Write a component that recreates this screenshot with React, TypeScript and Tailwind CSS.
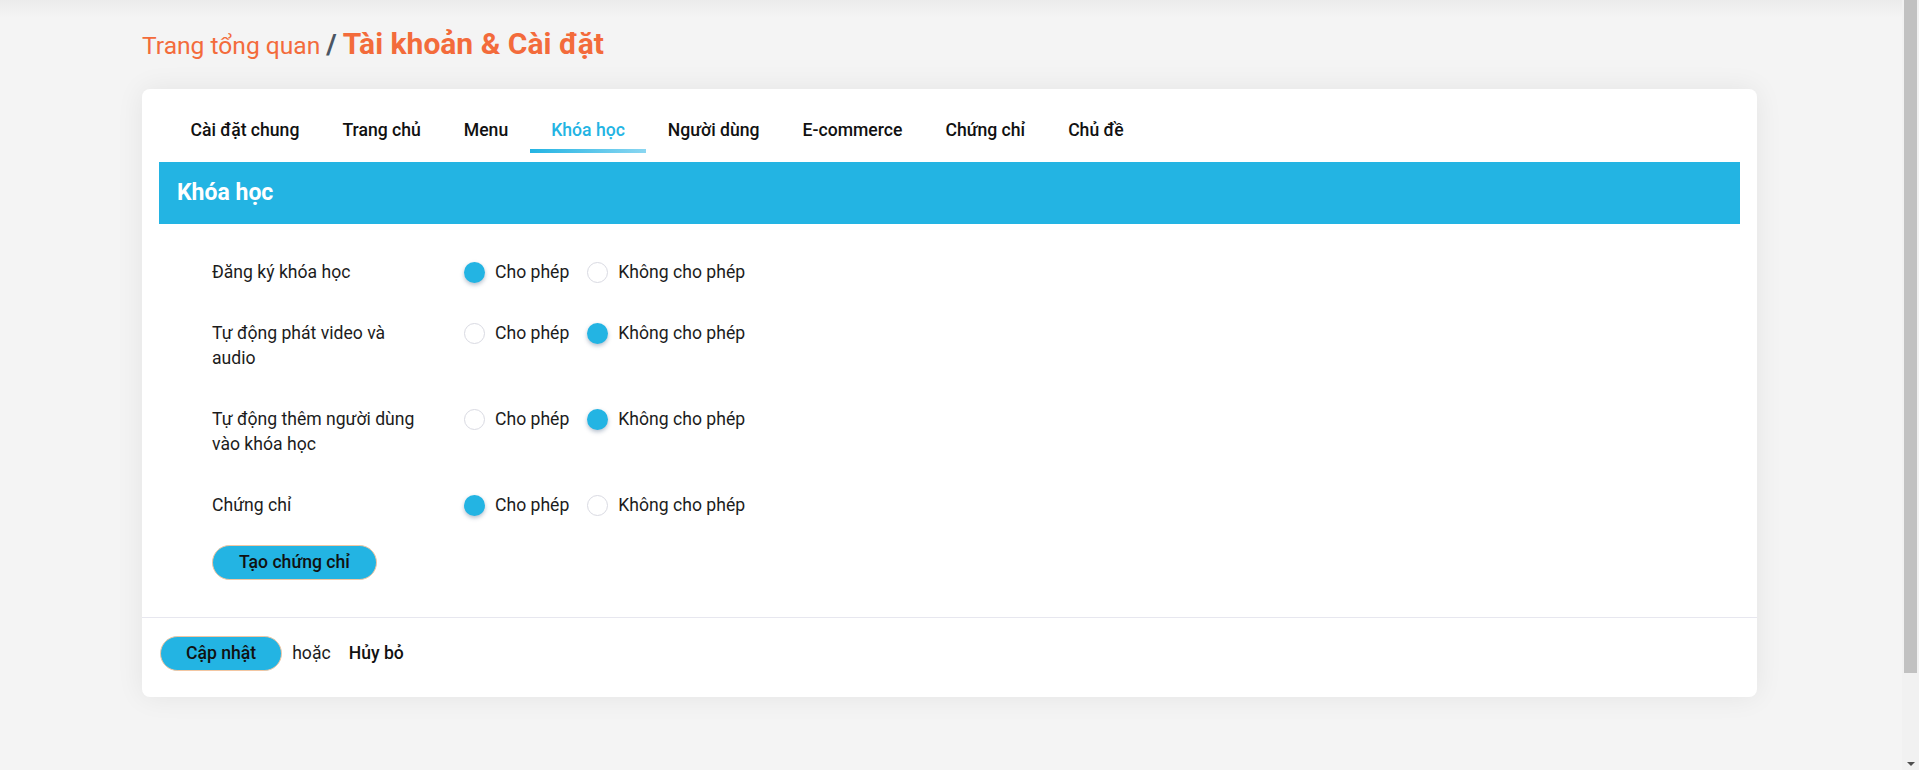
const tabs = ['Cài đặt chung', 'Trang chủ', 'Menu', 'Khóa học', 'Người dùng', 'E-commerce', 'Chứng chỉ', 'Chủ đề'];

const settings = [
  { label: 'Đăng ký khóa học', allow: true },
  { label: 'Tự động phát video và audio', allow: false },
  { label: 'Tự động thêm người dùng vào khóa học', allow: false },
  { label: 'Chứng chỉ', allow: true },
];

function Radio({ checked, label }: { checked: boolean; label: string }) {
  return (
    <label className="flex items-center gap-[10px] cursor-pointer">
      {checked ? (
        <span className="w-[21px] h-[21px] rounded-full bg-[#23b4e3] shadow-[0_2px_4px_rgba(40,70,110,0.35)]" />
      ) : (
        <span className="w-[21px] h-[21px] rounded-full bg-white border border-[#d9dae2]" />
      )}
      <span className="text-[17.6px] leading-[25px] text-[#1c1c1c]">{label}</span>
    </label>
  );
}

export default function App() {
  return (
    <div className="flex h-[770px] overflow-hidden bg-[linear-gradient(#ebebeb,#f4f4f4_18px)] font-['Roboto',sans-serif]">
      <div className="flex-1 pl-[142px] pr-[145px] pt-[25px]">
        <div className="flex items-baseline leading-[38px] mb-[24px]">
          <span className="text-[24.6px] text-[#f36b3b]">Trang tổng quan</span>
          <span className="text-[28px] font-bold text-[#4b5563] mx-[6px]">/</span>
          <span className="text-[30px] font-bold text-[#f36b3b]">Tài khoản &amp; Cài đặt</span>
        </div>

        <div className="bg-white rounded-[8px] shadow-[0_0_28px_rgba(0,0,0,0.07)]">
          <div className="px-[17px] pt-[17px]">
            <div className="flex pl-[10px]">
              {tabs.map((t) => {
                const active = t === 'Khóa học';
                return (
                  <div key={t} className="flex flex-col items-stretch pt-[12px]">
                    <span
                      className={`px-[21.5px] text-[17.6px] leading-[24px] font-medium whitespace-nowrap ${
                        active ? 'text-[#23b4e3]' : 'text-[#111]'
                      }`}
                    >
                      {t}
                    </span>
                    <span
                      className={`mt-[7px] h-[4px] ${
                        active ? 'bg-[linear-gradient(90deg,#23b4e3,#8ad6f1)]' : 'bg-transparent'
                      }`}
                    />
                  </div>
                );
              })}
            </div>

            <div className="mt-[9px] h-[62px] bg-[#23b4e3] flex items-center px-[18px]">
              <h2 className="text-[23px] font-bold text-white">Khóa học</h2>
            </div>

            <div className="pl-[53px] pt-[36px] pb-[37px] flex flex-col">
              <div className="flex flex-col gap-[36px]">
                {settings.map((s) => (
                  <div key={s.label} className="flex items-start">
                    <div className="w-[215px] text-[17.6px] leading-[25px] text-[#1c1c1c]">{s.label}</div>
                    <div className="ml-[37px] flex items-center gap-[18px] h-[25px]">
                      <Radio checked={s.allow} label="Cho phép" />
                      <Radio checked={!s.allow} label="Không cho phép" />
                    </div>
                  </div>
                ))}
              </div>
              <div className="mt-[27px]">
                <button className="h-[35px] px-[26px] rounded-full bg-[#23b4e3] border border-[#f2c6a2] text-[17.6px] font-medium text-[#111]">
                  Tạo chứng chỉ
                </button>
              </div>
            </div>
          </div>

          <div className="border-t border-[#e7e7ef] px-[18px] pt-[18px] pb-[26px] flex items-center">
            <button className="h-[35px] px-[25px] rounded-full bg-[#23b4e3] border border-[#f2c6a2] text-[17.6px] font-medium text-[#111]">
              Cập nhật
            </button>
            <span className="ml-[10px] text-[17.6px] text-[#1c1c1c]">hoặc</span>
            <button className="ml-[18px] text-[17.6px] font-medium text-[#111]">Hủy bỏ</button>
          </div>
        </div>
      </div>

      <div className="w-[17px] shrink-0 bg-[#f1f1f1] flex flex-col">
        <div className="h-[673px] mx-[2px] bg-[#c1c1c1]" />
        <div className="flex-1" />
        <div className="h-[12px] flex items-center justify-center">
          <span className="w-0 h-0 border-l-[4px] border-r-[4px] border-t-[4px] border-l-transparent border-r-transparent border-t-[#505050]" />
        </div>
      </div>
    </div>
  );
}
